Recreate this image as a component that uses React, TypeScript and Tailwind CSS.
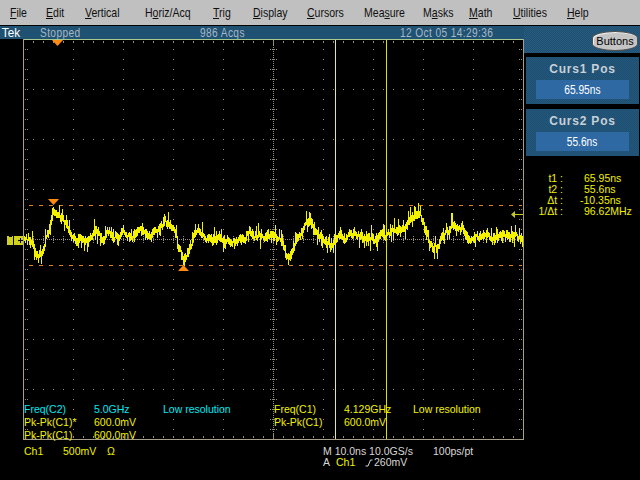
import React from "react";

const menus: [string, string, string][] = [
  ["", "F", "ile"],
  ["", "E", "dit"],
  ["", "V", "ertical"],
  ["H", "o", "riz/Acq"],
  ["", "T", "rig"],
  ["", "D", "isplay"],
  ["", "C", "ursors"],
  ["Mea", "s", "ure"],
  ["M", "a", "sks"],
  ["", "M", "ath"],
  ["", "U", "tilities"],
  ["", "H", "elp"],
];

function gridPath() {
  const d: string[] = [];
  const dot = (x: number, y: number, w = 1, h = 1) => d.push(`M${x} ${y}h${w}v${h}h${-w}z`);
  for (let i = 0; i <= 50; i++) {
    const x = 23 + i * 10;
    dot(x, 41, 1, 2);
    dot(x, 436, 1, 2);
  }
  for (let j = 0; j <= 40; j++) {
    const y = 39 + j * 10;
    dot(25, y);
    dot(27, y);
    dot(519, y);
    dot(521, y);
  }
  for (let r = 1; r < 8; r++) {
    if (r === 4) continue;
    const y = 39 + r * 50;
    for (let i = 0; i <= 50; i++) dot(23 + i * 10, y);
  }
  for (let c = 1; c < 10; c++) {
    if (c === 5) continue;
    const x = 23 + c * 50;
    for (let j = 0; j <= 40; j++) dot(x, 39 + j * 10);
  }
  for (let y = 45; y < 436; y += 2) dot(273, y);
  for (let x = 25; x < 522; x += 2) dot(x, 239);
  for (let j = 1; j < 40; j++) {
    const y = 39 + j * 10;
    dot(270, y);
    dot(272, y);
    dot(274, y);
    dot(276, y);
  }
  for (let i = 1; i < 50; i++) {
    const x = 23 + i * 10;
    dot(x, 236);
    dot(x, 238);
    dot(x, 240);
    dot(x, 242);
  }
  dot(273, 39, 1, 6);
  dot(273, 433, 1, 6);
  return d.join("");
}

const BASE: [number, number][] = [
  [24, 240], [28, 236], [32, 240], [35, 250], [38, 255], [41, 252], [44, 240], [47, 228], [50, 225],
  [52, 212], [55, 209], [58, 212], [60, 217], [63, 222], [66, 226], [70, 232], [74, 236], [80, 236],
  [100, 235], [130, 234], [150, 234], [158, 228], [165, 220], [170, 223], [175, 235], [178, 250], [181, 255],
  [183, 259], [187, 254], [190, 244], [195, 236], [200, 233], [206, 238], [220, 240], [260, 238], [272, 238],
  [280, 244], [288, 256], [292, 254], [296, 240], [300, 232], [304, 222], [307, 218], [310, 221], [313, 226],
  [318, 235], [325, 240], [330, 243], [340, 235], [380, 235], [390, 232], [405, 228], [415, 217], [420, 221],
  [424, 228], [428, 240], [431, 250], [434, 254], [437, 252], [440, 245], [445, 237], [450, 230], [455, 228],
  [460, 230], [465, 232], [475, 236], [522, 238],
];

function wave() {
  let s = 12345;
  const rnd = () => {
    s = (s * 1664525 + 1013904223) >>> 0;
    return s / 4294967296;
  };
  const base = (x: number) => {
    for (let i = 0; i < BASE.length - 1; i++) {
      const [a, b] = BASE[i];
      const [c, e] = BASE[i + 1];
      if (x >= a && x <= c) return b + ((e - b) * (x - a)) / (c - a);
    }
    return 238;
  };
  const d: string[] = [];
  let off = 0;
  let prev = 238;
  for (let x = 24; x <= 522; x++) {
    off = off * 0.8 + (rnd() - 0.5) * 6;
    const c = base(x) + off;
    let up = 1.5 + rnd() * 4;
    let dn = 1.5 + rnd() * 4;
    const r = rnd();
    if (r < 0.14) up += 3 + rnd() * 5;
    else if (r < 0.28) dn += 3 + rnd() * 5;
    const y1 = Math.round(Math.min(c - up, prev));
    const y2 = Math.round(Math.max(c + dn, prev));
    d.push(`M${x}.5 ${y1}V${y2}`);
    prev = Math.round(c);
  }
  return d.join("");
}

const grid = gridPath();
const trace = wave();

function Meas({ a, b, c, tone }: { a: string; b: string; c?: string; tone: string }) {
  return (
    <div className={`flex h-[13px] items-center ${tone}`}>
      <span className="w-[70px]">{a}</span>
      <span className="w-[69px]">{b}</span>
      {c && <span>{c}</span>}
    </div>
  );
}

export default function App() {
  return (
    <div className="flex h-[480px] w-[640px] flex-col overflow-hidden bg-black font-['Liberation_Sans',sans-serif] text-[11px] leading-none">
      <div className="grid h-[25px] shrink-0 grid-cols-[36px_39px_60px_68px_40px_54px_57px_59px_46px_44px_54px_auto] items-center bg-[#c0c0c0] pl-[10px] text-[13px] text-[#101010]">
        {menus.map(([p, u, r]) => (
          <span key={p + u + r} className="origin-left scale-x-[0.81] whitespace-nowrap">
            {p}
            <span className="underline">{u}</span>
            {r}
          </span>
        ))}
      </div>
      <div className="h-px shrink-0 bg-black" />
      <div className="flex min-h-0 flex-1">
        <div className="flex w-[524px] flex-col">
          <div className="flex h-[13px] shrink-0 items-center bg-[#1f5173] text-[13px] tracking-[0.5px] text-[#a8b8c4]">
            <span className="w-[40px] origin-left scale-x-[0.9] pl-[2px] tracking-normal text-white">Tek</span>
            <span className="w-[160px] origin-left scale-x-[0.78] whitespace-nowrap">Stopped</span>
            <span className="w-[200px] origin-left scale-x-[0.78] whitespace-nowrap">986 Acqs</span>
            <span className="origin-left scale-x-[0.78] whitespace-nowrap">12 Oct 05 14:29:36</span>
          </div>
          <div className="relative h-[401px] shrink-0">
            <svg viewBox="0 39 524 401" width="524" height="401" className="block">
              <g shapeRendering="crispEdges">
                <path d={grid} fill="#948c78" />
                <rect x="23" y="39" width="500" height="1" fill="#a8c88c" />
                <rect x="23" y="39" width="1" height="401" fill="#a89f88" />
                <rect x="523" y="39" width="1" height="401" fill="#a89f88" />
                <rect x="23" y="439" width="501" height="1" fill="#a89f88" />
                <rect x="335" y="40" width="1" height="399" fill="#e8e880" />
                <rect x="386" y="40" width="1" height="399" fill="#e0e000" />
                <line x1="29" y1="205.500" x2="522" y2="205.500" stroke="#e08020" strokeDasharray="4 6" />
                <line x1="29" y1="265.500" x2="522" y2="265.500" stroke="#e08020" strokeDasharray="4 6" />
                <path d={trace} fill="none" stroke="#f2f200" strokeWidth="1" />
              </g>
              <path d="M52 40h11l-5.500 6z" fill="#ff8c10" />
              <path d="M48 199h11l-5.500 6z" fill="#ff8c10" />
              <path d="M178 271h11l-5.500 -6z" fill="#ff8c10" />
              <path d="M511 214.500l4-3.500v3h8v1h-8v3z" fill="#c8c820" />
              <g shapeRendering="crispEdges">
                <rect x="7" y="236" width="6" height="9" fill="#d0d020" />
                <rect x="14" y="236" width="9" height="9" fill="#d0d020" />
                <rect x="9" y="236" width="3" height="1" fill="#000" />
                <rect x="18" y="240" width="5" height="1" fill="#000" />
                <rect x="20" y="238" width="1" height="5" fill="#000" />
              </g>
            </svg>
            <div className="absolute left-[24px] top-[364px] text-[10.500px]">
              <Meas a="Freq(C2)" b="5.0GHz" c="Low resolution" tone="text-[#00e8f0]" />
              <Meas a="Pk-Pk(C1)*" b="600.0mV" tone="text-[#f0f000]" />
              <Meas a="Pk-Pk(C1)" b="600.0mV" tone="text-[#f0f000]" />
            </div>
            <div className="absolute left-[274px] top-[364px] text-[10.500px]">
              <Meas a="Freq(C1)" b="4.129GHz" c="Low resolution" tone="text-[#f0f000]" />
              <Meas a="Pk-Pk(C1)" b="600.0mV" tone="text-[#f0f000]" />
            </div>
          </div>
          <div className="flex flex-1 text-[10.500px]">
            <div className="flex w-[323px] items-start pl-[24px] pt-[6px] text-[#f0f000]">
              <span className="w-[39px]">Ch1</span>
              <span className="w-[44px]">500mV</span>
              <span>Ω</span>
            </div>
            <div className="flex flex-col gap-[1px] pt-[6px] text-[#d8d8d8]">
              <div className="flex h-[10px] items-center">
                <span className="w-[110px]">M 10.0ns 10.0GS/s</span>
                <span>100ps/pt</span>
              </div>
              <div className="flex h-[10px] items-center">
                <span className="w-[13px]">A</span>
                <span className="w-[29px] text-[#f0f000]">Ch1</span>
                <svg width="9" height="9" viewBox="0 0 9 9" className="block">
                  <path d="M0.500 8H3L5.500 2H7.500" fill="none" stroke="#d8d8d8" strokeWidth="1" />
                </svg>
                <span>260mV</span>
              </div>
            </div>
          </div>
        </div>
        <div className="flex w-[116px] flex-col">
          <div className="flex h-[27px] shrink-0 items-start justify-end bg-[repeating-conic-gradient(#1d4f72_0_25%,#2a5c80_0_50%)] bg-[length:2px_2px] pr-[2px] pt-[5px]">
            <div className="flex h-[20px] w-[46px] items-center justify-center rounded-[50%/35%] border border-[#505050] bg-[#c4c4c4] text-[11px] text-black shadow-[inset_1px_1px_0_#f0f0f0]">
              Buttons
            </div>
          </div>
          <div className="ml-[2px] mr-px mt-[4px] flex flex-col gap-[5px]">
            {[
              ["Curs1 Pos", "65.95ns"],
              ["Curs2 Pos", "55.6ns"],
            ].map(([t, v]) => (
              <div key={t} className="flex h-[47px] flex-col items-center bg-[repeating-conic-gradient(#1d4f72_0_25%,#25577a_0_50%)] bg-[length:2px_2px] pt-[6px]">
                <div className="text-[12px] font-bold tracking-[0.8px] text-[#c8d0d8]">{t}</div>
                <div className="mt-[5px] flex h-[19px] w-[93px] items-center justify-center bg-[#2e69a4] text-[12px] text-white">
                  <span className="scale-x-[0.85]">{v}</span>
                </div>
              </div>
            ))}
          </div>
          <div className="mt-[17px] grid grid-cols-[39px_auto] gap-x-[21px] text-[10.500px] leading-[11px] text-[#f0f000]">
            <span className="text-right">t1 :</span><span>65.95ns</span>
            <span className="text-right">t2 :</span><span>55.6ns</span>
            <span className="text-right">Δt :</span><span className="-ml-[4px]">-10.35ns</span>
            <span className="text-right">1/Δt :</span><span>96.62MHz</span>
          </div>
        </div>
      </div>
    </div>
  );
}
